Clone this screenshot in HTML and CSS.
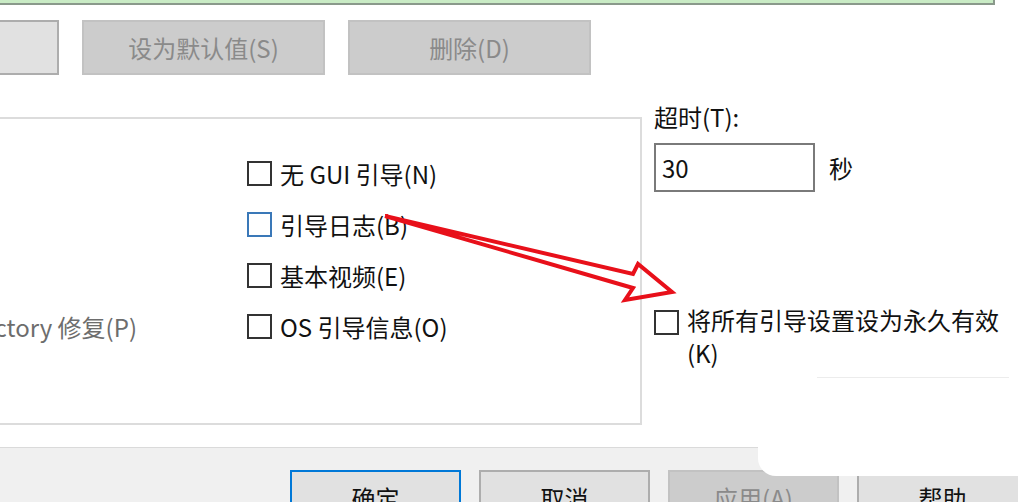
FILE: index.html
```html
<!DOCTYPE html>
<html lang="zh-CN">
<head>
    <meta charset="UTF-8">
    <meta name="viewport" content="width=device-width, initial-scale=1.0">
    <title>系统配置 - 引导</title>
    <link rel="stylesheet" href="styles.css">
</head>
<body>

    <div class="os-list"></div>

    <div class="list-actions">
        <button class="btn btn-cut"></button>
        <button class="btn" disabled>设为默认值(S)</button>
        <button class="btn" disabled>删除(D)</button>
    </div>

    <div class="boot-settings">
        <div class="boot-options">
            <div class="option-left">Active Directory 修复(P)</div>

            <label class="check row-1">
                <span class="box"></span>
                <span>无 GUI 引导(N)</span>
            </label>
            <label class="check row-2">
                <span class="box box-focus"></span>
                <span>引导日志(B)</span>
            </label>
            <label class="check row-3">
                <span class="box"></span>
                <span>基本视频(E)</span>
            </label>
            <label class="check row-4">
                <span class="box"></span>
                <span>OS 引导信息(O)</span>
            </label>
        </div>

        <div class="side-panel">
            <div class="timeout-label">超时(T):</div>
            <div class="timeout-row">
                <input type="text" class="timeout-input" value="30">
                <span>秒</span>
            </div>
            <label class="check permanent">
                <span class="box"></span>
                <span class="permanent-text">将所有引导设置设为永久有效(K)</span>
            </label>
        </div>
    </div>

    <div class="dialog-footer">
        <button class="btn btn-small btn-default">确定</button>
        <button class="btn btn-small">取消</button>
        <button class="btn btn-small" disabled>应用(A)</button>
        <button class="btn btn-small">帮助</button>
    </div>

    <!-- white patch left over from the screenshot tool -->
    <div class="cover-patch"></div>

    <!-- red annotation arrow -->
    <svg class="arrow" width="1018" height="502" viewBox="0 0 1018 502">
        <polygon points="385,216 633,274 638,264 672,292 625,300 633,288"
                 fill="none" stroke="#e8101a" stroke-width="4" stroke-linejoin="miter"/>
    </svg>

</body>
</html>
```

FILE: styles.css
```css
/* base */
body {
    margin: 0;
    width: 1018px;
    height: 502px;
    overflow: hidden;
    position: relative;
    background-color: #ffffff;
    font-family: "Noto Sans CJK SC", "Noto Sans", sans-serif;
    font-size: 24px;
    color: #111111;
}

/* bottom edge of the OS list above */
.os-list {
    width: 993px;
    height: 3px;
    background-color: #c9ebc5;
    border-right: 2px solid #8a998b;
    border-bottom: 2px solid #8a998b;
}

/* buttons */
.btn {
    box-sizing: border-box;
    width: 243px;
    height: 55px;
    padding: 0;
    font-family: inherit;
    font-size: 24px;
    color: #111111;
    background-color: #e1e1e1;
    border: 2px solid #adadad;
    border-radius: 0;
}
.btn:disabled {
    background-color: #cccccc;
    border-color: #c2c2c2;
    color: #8a8a8a;
}
.btn-small {
    width: 171px;
    flex-shrink: 0;
}
.btn-default {
    border-color: #0078d7;
}

.list-actions {
    display: flex;
    gap: 23px;
    margin-top: 15px;
}
.btn-cut {
    margin-left: -184px;
}

/* middle area */
.boot-settings {
    display: flex;
    align-items: flex-start;
}

.boot-options {
    box-sizing: border-box;
    width: 842px;
    height: 308px;
    margin: 42px 0 22px -200px;
    padding-top: 29px;
    border: 2px solid #dcdcdc;
    display: grid;
    grid-template-columns: 335px 1fr;
    grid-auto-rows: 51px;
    column-gap: 110px;
}

.option-left {
    grid-column: 1;
    grid-row: 4;
    display: flex;
    justify-content: flex-end;
    align-items: center;
    white-space: nowrap;
    color: #6d6d6d;
}

.check {
    display: flex;
    align-items: center;
    gap: 8px;
    white-space: nowrap;
}
.boot-options .check {
    grid-column: 2;
}
.row-1 { grid-row: 1; }
.row-2 { grid-row: 2; }
.row-3 { grid-row: 3; }
.row-4 { grid-row: 4; }

.box {
    box-sizing: border-box;
    width: 25px;
    height: 25px;
    flex-shrink: 0;
    border: 2px solid #333333;
    background-color: #ffffff;
}
.box-focus {
    border-color: #3a78b8;
}

/* timeout and permanent checkbox */
.side-panel {
    margin-left: 12px;
    padding-top: 27px;
}
.timeout-label {
    line-height: 30px;
}
.timeout-row {
    display: flex;
    align-items: center;
    gap: 14px;
    margin-top: 11px;
}
.timeout-input {
    box-sizing: border-box;
    width: 161px;
    height: 49px;
    padding: 0 6px;
    border: 2px solid #7a7a7a;
    border-radius: 0;
    font-family: inherit;
    font-size: 24px;
    color: #111111;
    outline: none;
}
.permanent {
    align-items: flex-start;
    margin-top: 111px;
    white-space: normal;
}
.permanent .box {
    margin-top: 7px;
}
.permanent-text {
    width: 320px;
    line-height: 33px;
}

/* footer */
.dialog-footer {
    display: flex;
    gap: 18px;
    padding: 22px 0 0 290px;
    height: 60px;
    background-color: #f0f0f0;
    border-top: 1px solid #dadada;
}

/* overlays */
.cover-patch {
    position: absolute;
    left: 758px;
    top: 377px;
    width: 270px;
    height: 99px;
    background-color: #ffffff;
    border-bottom-left-radius: 18px;
}
.cover-patch::before {
    content: "";
    position: absolute;
    left: 59px;
    top: 0;
    width: 192px;
    height: 1px;
    background-color: #ececec;
}

.arrow {
    position: absolute;
    left: 0;
    top: 0;
    pointer-events: none;
}
```
